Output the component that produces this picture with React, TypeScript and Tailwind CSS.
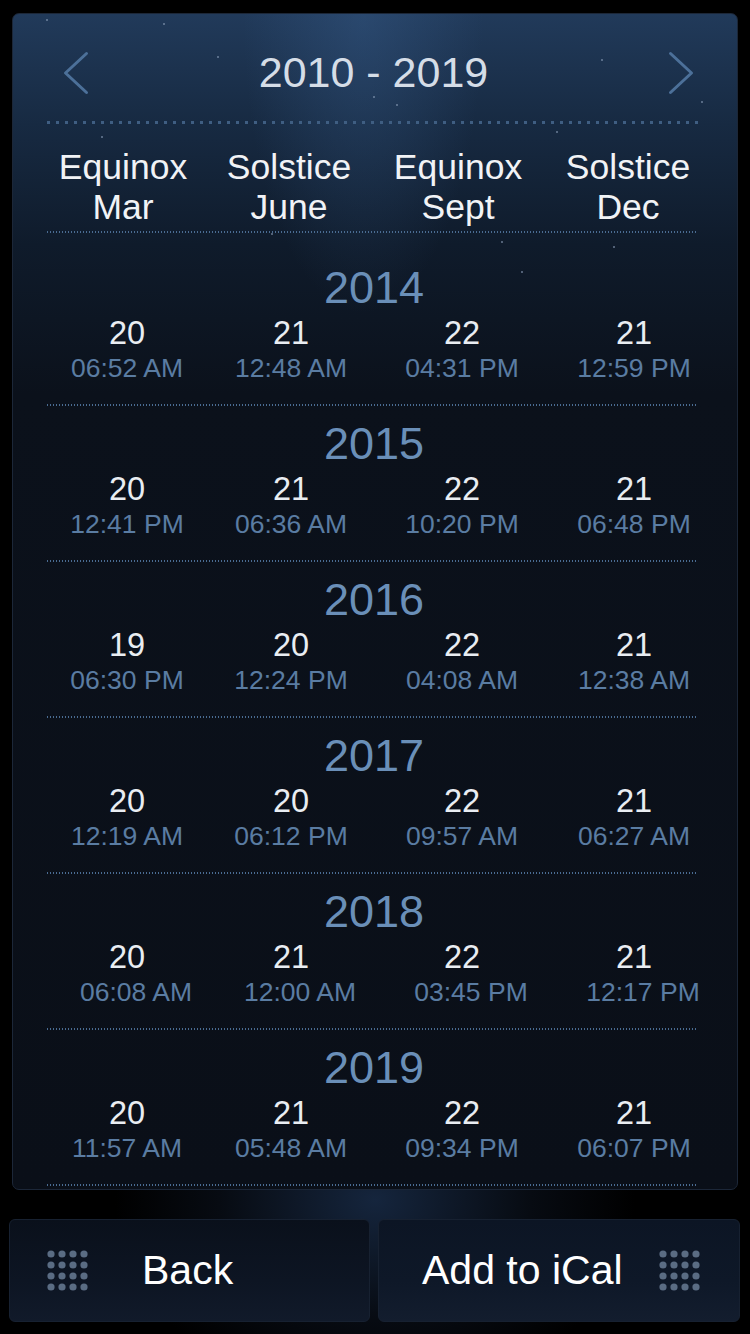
type Row = { year: string; days: string[]; times: string[]; shift?: boolean };

const ROWS: Row[] = [
  { year: '2014', days: ['20', '21', '22', '21'], times: ['06:52 AM', '12:48 AM', '04:31 PM', '12:59 PM'] },
  { year: '2015', days: ['20', '21', '22', '21'], times: ['12:41 PM', '06:36 AM', '10:20 PM', '06:48 PM'] },
  { year: '2016', days: ['19', '20', '22', '21'], times: ['06:30 PM', '12:24 PM', '04:08 AM', '12:38 AM'] },
  { year: '2017', days: ['20', '20', '22', '21'], times: ['12:19 AM', '06:12 PM', '09:57 AM', '06:27 AM'] },
  { year: '2018', days: ['20', '21', '22', '21'], times: ['06:08 AM', '12:00 AM', '03:45 PM', '12:17 PM'], shift: true },
  { year: '2019', days: ['20', '21', '22', '21'], times: ['11:57 AM', '05:48 AM', '09:34 PM', '06:07 PM'] },
];

const HEADERS = [
  ['Equinox', 'Mar'],
  ['Solstice', 'June'],
  ['Equinox', 'Sept'],
  ['Solstice', 'Dec'],
];

const STARS = [
  [45, 18], [100, 135], [216, 55], [162, 22], [395, 103], [372, 95], [555, 130], [600, 58],
  [700, 100], [520, 270], [612, 245], [270, 232], [500, 240], [715, 1203], [193, 1222], [420, 160],
];

function Chevron({ flip }: { flip?: boolean }) {
  return (
    <svg width="26" height="44" viewBox="0 0 26 44" className="shrink-0">
      <polyline
        points={flip ? '2.5,2.5 23.5,22 2.5,41.5' : '23.5,2.5 2.5,22 23.5,41.5'}
        fill="none"
        stroke="#4c7099"
        strokeWidth="3"
        strokeLinecap="round"
        strokeLinejoin="round"
      />
    </svg>
  );
}

function DotGrid() {
  const dots = [];
  for (let r = 0; r < 4; r++) {
    for (let c = 0; c < 4; c++) {
      dots.push(<circle key={`${r}-${c}`} cx={5 + c * 11} cy={5 + r * 11} r={3.6} fill="#5a6c83" />);
    }
  }
  return (
    <svg width="43" height="43" viewBox="0 0 43 43" className="shrink-0">
      {dots}
    </svg>
  );
}

function Dotted() {
  return (
    <div className="ml-[34px] w-[650px] h-[2px] bg-[repeating-linear-gradient(90deg,#4a6c92_0_1.5px,transparent_1.5px_3px)]" />
  );
}

export default function App() {
  return (
    <div className="relative w-[750px] h-[1334px] overflow-hidden bg-[radial-gradient(ellipse_260px_200px_at_375px_1200px,#15253d_0%,#070b12_60%,#000_100%)] font-['Liberation_Sans',Arial,sans-serif]">
      <div className="relative ml-[12px] mt-[13px] w-[726px] h-[1177px] rounded-[7px] border border-[#1c2738] overflow-hidden bg-[linear-gradient(180deg,#213a5a_0px,#172a42_110px,#0f1b2b_230px,#0b111b_380px,#0a0f18_100%)]">
        <div className="absolute inset-0 bg-[radial-gradient(ellipse_120px_300px_at_350px_0px,rgba(60,100,150,0.35),transparent)]" />
        {STARS.map(([x, y], i) => (
          <div
            key={i}
            className="absolute w-[2px] h-[2px] rounded-full bg-[#8fa3bd] opacity-70"
            style={{ left: x - 12, top: y - 13 }}
          />
        ))}

        <div className="relative">
          <div className="h-[107px] pt-[10px] flex items-center justify-between pl-[50px] pr-[43px]">
            <Chevron />
            <div className="text-[43px] leading-none text-[#d5dde7] pr-[10px]">2010 - 2019</div>
            <Chevron flip />
          </div>

          <div className="ml-[34px] w-[657px] h-[3px] bg-[repeating-linear-gradient(90deg,#3f5e82_0_3px,transparent_3px_9px)]" />

          <div className="pt-[23px] pb-[4px] ml-[25px] grid grid-cols-[170px_162px_176px_164px] text-[35.5px] leading-[40px] text-[#f1f3f6]">
            {HEADERS.map(([a, b], i) => (
              <div key={i} className="flex flex-col items-center">
                <span>{a}</span>
                <span>{b}</span>
              </div>
            ))}
          </div>

          <Dotted />

          <div className="pt-[17px]">
            {ROWS.map((row) => (
              <div key={row.year}>
                <div className="pt-[14px] pb-[22px]">
                  <div className="text-center text-[45px] leading-[48px] text-[#6a8fb8] pr-[2px]">{row.year}</div>
                  <div className="ml-[29px] grid grid-cols-[170px_158px_184px_160px]">
                    {row.days.map((d, i) => (
                      <div key={i} className="flex flex-col items-center">
                        <span className="text-[32.5px] leading-[42px] text-[#e9edf2]">{d}</span>
                        <span
                          className={`text-[26.5px] leading-[28px] text-[#5a7ca2] whitespace-nowrap ${row.shift ? 'pl-[18px]' : ''}`}
                        >
                          {row.times[i]}
                        </span>
                      </div>
                    ))}
                  </div>
                </div>
                <Dotted />
              </div>
            ))}
          </div>
        </div>
      </div>

      <div className="relative mt-[29px] ml-[9px] flex gap-[8px]">
        <button className="w-[361px] h-[103px] rounded-[6px] border border-[#172131] bg-[linear-gradient(180deg,#0a101b_0%,#0d1523_60%,#111a2a_100%)] flex items-center pl-[36px]">
          <DotGrid />
          <span className="ml-[53px] text-[41px] text-white leading-none">Back</span>
        </button>
        <button className="w-[362px] h-[103px] rounded-[6px] border border-[#172131] bg-[linear-gradient(180deg,#0c1524_0%,#0e1828_60%,#131d2e_100%)] flex items-center pl-[43px] pr-[38px]">
          <span className="text-[41px] text-white leading-none">Add to iCal</span>
          <span className="ml-auto">
            <DotGrid />
          </span>
        </button>
      </div>
    </div>
  );
}
